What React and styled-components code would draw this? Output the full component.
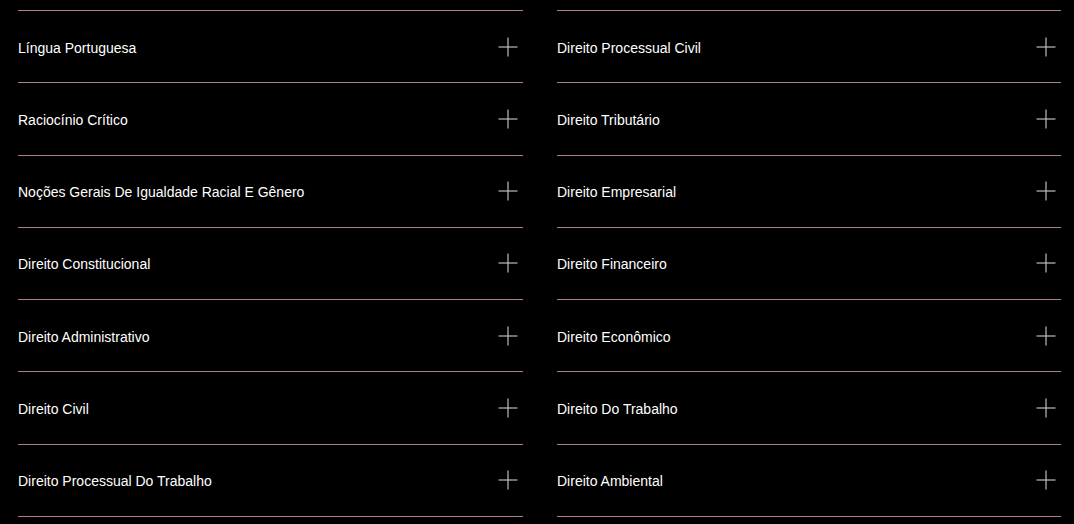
import React from 'react';
import styled, { createGlobalStyle } from 'styled-components';

const GlobalStyle = createGlobalStyle`
    html, body{
        margin: 0;
        padding: 0;
        background: #000;
    }
    body{
        font-family: "Liberation Sans", Arial, sans-serif;
    }
`

const Page = styled.div`
    display: grid;
    grid-template-columns: 505px 504px;
    column-gap: 34px;
    padding: 10px 0 0 18px;
    background: #000;
    min-height: 524px;
    box-sizing: border-box;
`

const Column = styled.ul`
    list-style: none;
    margin: 0;
    padding: 0;
    border-top: 1px solid #b27d89;
`

const Item = styled.li`
    display: flex;
    align-items: center;
    justify-content: space-between;
    height: 71.29px;
    border-bottom: 1px solid #b27d89;
    color: #fff;
    font-size: 14px;
    cursor: pointer;
`

const Label = styled.span`
    padding-top: 2px;
`

const PlusIcon = styled.svg`
    width: 20px;
    height: 20px;
    margin-right: 5px;
    flex-shrink: 0;
    stroke: #bdbdbd;
    stroke-width: 1.2;
`

const Plus = () => (
    <PlusIcon viewBox="0 0 20 20" fill="none">
        <line x1="10" y1="0.5" x2="10" y2="19.5" />
        <line x1="0.5" y1="10" x2="19.5" y2="10" />
    </PlusIcon>
)

const left = [
    'Língua Portuguesa',
    'Raciocínio Crítico',
    'Noções Gerais De Igualdade Racial E Gênero',
    'Direito Constitucional',
    'Direito Administrativo',
    'Direito Civil',
    'Direito Processual Do Trabalho',
]

const right = [
    'Direito Processual Civil',
    'Direito Tributário',
    'Direito Empresarial',
    'Direito Financeiro',
    'Direito Econômico',
    'Direito Do Trabalho',
    'Direito Ambiental',
]

const App = () => {
    return (
        <>
            <GlobalStyle />
            <Page>
                {[left, right].map((list, i) => (
                    <Column key={i}>
                        {list.map((name) => (
                            <Item key={name}>
                                <Label>{name}</Label>
                                <Plus />
                            </Item>
                        ))}
                    </Column>
                ))}
            </Page>
        </>
    );
};

export default App;
